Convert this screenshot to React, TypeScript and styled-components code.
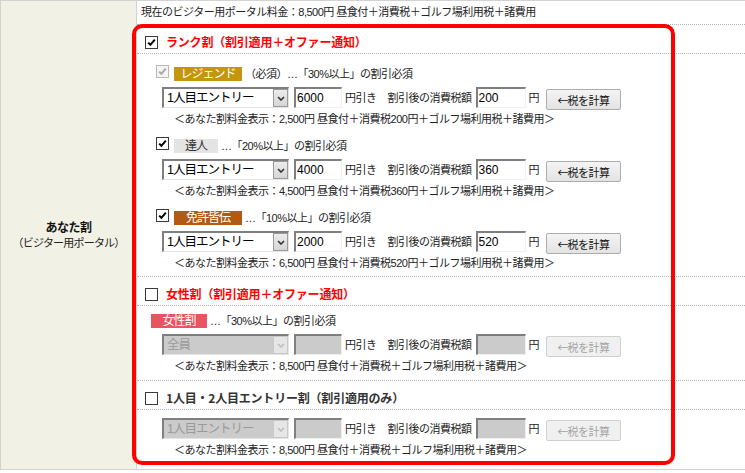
import React from 'react';
import styled, { createGlobalStyle } from 'styled-components';

const FONT = `"Liberation Sans", "Noto Sans CJK JP", sans-serif`;

const GlobalStyle = createGlobalStyle`
  html, body {
    margin: 0;
    padding: 0;
    background: #fff;
  }
  body {
    font-family: ${FONT};
    color: #222;
  }
`;

const Table = styled.div`
  display: grid;
  grid-template-columns: 136px 1fr;
  width: 745px;
  box-sizing: border-box;
  border-top: 1px solid #d2d2d2;
  border-bottom: 1px solid #d2d2d2;
  border-left: 1px solid #d2d2d2;
`;

const LabelCell = styled.div`
  background: #f2f1e6;
  border-right: 1px solid #d2d2d2;
  display: flex;
  flex-direction: column;
  align-items: center;
  justify-content: center;
  padding-top: 1px;
`;

const LabelMain = styled.div`
  font-size: 12px;
  font-weight: bold;
  line-height: 15px;
  color: #111;
  letter-spacing: -0.5px;
`;

const LabelSub = styled.div`
  font-size: 11px;
  line-height: 15px;
  color: #222;
  letter-spacing: -0.8px;
`;

const ContentCell = styled.div`
  min-width: 0;
`;

const FeeRow = styled.div`
  height: 23px;
  line-height: 23px;
  padding-left: 4px;
  font-size: 11px;
  letter-spacing: -0.5px;
  color: #222;
  border-bottom: 1px dotted #b4b4b4;
`;

const Highlight = styled.div`
  position: relative;

  &::after {
    content: '';
    position: absolute;
    top: -1px;
    left: -5px;
    width: 543px;
    bottom: 4px;
    box-sizing: border-box;
    border: 4px solid #ff0000;
    border-radius: 10px;
    pointer-events: none;
  }
`;

const SectionHead = styled.div`
  height: 22px;
  padding: 6px 0 0 8px;
  display: flex;
  align-items: center;
  gap: 8px;
  border-bottom: 1px dotted #b4b4b4;
`;

const HeadTitle = styled.span<{ $color: string }>`
  font-family: "Noto Sans CJK JP", "Liberation Sans", sans-serif;
  font-size: 12px;
  font-weight: bold;
  letter-spacing: -0.2px;
  color: ${p => p.$color};
  line-height: 16px;
`;

const SectionBody = styled.div<{ $pt: number; $pb: number; $last?: boolean }>`
  padding: ${p => p.$pt}px 0 ${p => p.$pb}px;
  border-bottom: ${p => (p.$last ? 'none' : '1px dotted #b4b4b4')};
`;

const RankBlock = styled.div`
  & + & {
    margin-top: 11px;
  }
`;

const LabelRow = styled.div<{ $indent: number }>`
  display: flex;
  align-items: flex-start;
  height: 16px;
  padding-left: ${p => p.$indent}px;
`;

const Badge = styled.span<{ $bg: string; $fg: string; $w: number }>`
  display: inline-block;
  width: ${p => p.$w}px;
  height: 14px;
  margin-top: 2px;
  line-height: 14px;
  text-align: center;
  font-size: 12px;
  letter-spacing: -1px;
  background: ${p => p.$bg};
  color: ${p => p.$fg};
`;

const Note = styled.span`
  margin: 2px 0 0 3px;
  font-size: 11px;
  line-height: 14px;
  letter-spacing: -0.5px;
  color: #222;
`;

const Box = styled.span<{ $disabled?: boolean }>`
  display: inline-flex;
  align-items: center;
  justify-content: center;
  width: 13px;
  height: 13px;
  box-sizing: border-box;
  border: 1px solid ${p => (p.$disabled ? '#b8b8b8' : '#3a3a3a')};
  background: ${p => (p.$disabled ? '#f4f4f4' : '#fff')};
  flex: none;
`;

const RankCheck = styled(Box)`
  margin-right: 5px;
`;

const SelectRow = styled.div`
  display: flex;
  align-items: flex-start;
  height: 23px;
  margin-top: 6px;
  padding-left: 25px;
`;

const SelectBox = styled.div<{ $disabled?: boolean }>`
  display: flex;
  width: 127px;
  height: 21px;
  box-sizing: border-box;
  border-style: solid;
  border-width: 2px 1px 1px 2px;
  border-color: #7f7f7f #e4e4e4 #e4e4e4 #7f7f7f;
  background: ${p => (p.$disabled ? '#cbcbcb' : '#fff')};
`;

const SelectValue = styled.span<{ $disabled?: boolean }>`
  flex: 1;
  padding: 1px 0 0 3px;
  font-size: 12.5px;
  line-height: 17px;
  letter-spacing: -1px;
  color: ${p => (p.$disabled ? '#9a9a9a' : '#000')};
  white-space: nowrap;
  overflow: hidden;
`;

const SelectArrow = styled.span<{ $disabled?: boolean }>`
  display: flex;
  align-items: center;
  justify-content: center;
  width: 15px;
  height: 18px;
  box-sizing: border-box;
  border: 1px solid ${p => (p.$disabled ? '#c8c8c8' : '#9a9a9a')};
  background: ${p => (p.$disabled ? '#e6e6e6' : 'linear-gradient(#ececec, #d6d6d6)')};
  color: ${p => (p.$disabled ? '#bdbdbd' : '#333')};
`;

const NumInput = styled.input<{ $w: number; $ml: number }>`
  width: ${p => p.$w}px;
  height: 21px;
  margin: 0 0 0 ${p => p.$ml}px;
  box-sizing: border-box;
  padding: 0 0 0 1px;
  border-style: solid;
  border-width: 2px 1px 1px 2px;
  border-color: #7f7f7f #f0f0f0 #f0f0f0 #7f7f7f;
  background: #fff;
  font-family: "Liberation Sans", sans-serif;
  font-size: 12px;
  color: #000;
  outline: none;

  &:disabled {
    background: #cbcbcb;
  }
`;

const RowText = styled.span<{ $ml: number }>`
  margin-left: ${p => p.$ml}px;
  font-size: 11px;
  line-height: 23px;
  letter-spacing: -0.5px;
  color: #222;
  white-space: nowrap;
`;

const CalcButton = styled.button`
  width: 75px;
  height: 21px;
  margin: 2px 0 0 7px;
  padding: 0;
  box-sizing: border-box;
  border: 1px solid #acacac;
  border-radius: 2px;
  background: linear-gradient(#f4f4f4, #e3e3e3);
  font-family: ${FONT};
  font-size: 11px;
  letter-spacing: -0.5px;
  color: #111;

  &:disabled {
    border-color: #d0d0d0;
    background: #f0f0f0;
    color: #a4a4a4;
  }
`;

const Arrow = styled.span`
  font-family: "Noto Sans CJK JP", sans-serif;
  letter-spacing: -1px;
`;

const Summary = styled.div`
  margin-top: 2px;
  padding-left: 37px;
  font-size: 11px;
  line-height: 14px;
  letter-spacing: -0.5px;
  color: #222;
  white-space: nowrap;
`;

const CheckBox: React.FC<{ checked?: boolean; disabled?: boolean; as?: typeof Box }> = ({
  checked,
  disabled,
  as: Comp = Box
}) => (
  <Comp $disabled={disabled}>
    {checked && (
      <svg width="9" height="9" viewBox="0 0 9 9">
        <path
          d="M1.2 4.6 L3.4 6.8 L7.8 1.6"
          fill="none"
          stroke={disabled ? '#a8a8a8' : '#000'}
          strokeWidth="2"
        />
      </svg>
    )}
  </Comp>
);

const Chevron = () => (
  <svg width="8" height="5" viewBox="0 0 8 5">
    <polyline points="1,1 4,4 7,1" fill="none" stroke="currentColor" strokeWidth="1.6" />
  </svg>
);

interface RowProps {
  option: string;
  discount?: string;
  tax?: string;
  disabled?: boolean;
  summary: string;
}

const PriceRow: React.FC<RowProps> = ({ option, discount = '', tax = '', disabled, summary }) => (
  <>
    <SelectRow>
      <SelectBox $disabled={disabled}>
        <SelectValue $disabled={disabled}>{option}</SelectValue>
        <SelectArrow $disabled={disabled}>
          <Chevron />
        </SelectArrow>
      </SelectBox>
      <NumInput $w={48} $ml={5} value={discount} disabled={disabled} readOnly />
      <RowText $ml={3}>円引き</RowText>
      <RowText $ml={11}>割引後の消費税額</RowText>
      <NumInput $w={50} $ml={4} value={tax} disabled={disabled} readOnly />
      <RowText $ml={3}>円</RowText>
      <CalcButton disabled={disabled}>
        <Arrow>←</Arrow>税を計算
      </CalcButton>
    </SelectRow>
    <Summary>{summary}</Summary>
  </>
);

const ranks = [
  {
    name: 'レジェンド',
    bg: '#c4960c',
    fg: '#fff',
    w: 68,
    note: '（必須）…「30%以上」の割引必須',
    fixed: true,
    discount: '6000',
    tax: '200',
    summary: '＜あなた割料金表示：2,500円 昼食付＋消費税200円＋ゴルフ場利用税＋諸費用＞'
  },
  {
    name: '達人',
    bg: '#e4e4e4',
    fg: '#333',
    w: 44,
    note: '…「20%以上」の割引必須',
    fixed: false,
    discount: '4000',
    tax: '360',
    summary: '＜あなた割料金表示：4,500円 昼食付＋消費税360円＋ゴルフ場利用税＋諸費用＞'
  },
  {
    name: '免許皆伝',
    bg: '#b25a12',
    fg: '#fff',
    w: 68,
    note: '…「10%以上」の割引必須',
    fixed: false,
    discount: '2000',
    tax: '520',
    summary: '＜あなた割料金表示：6,500円 昼食付＋消費税520円＋ゴルフ場利用税＋諸費用＞'
  }
];

const baseSummary = '＜あなた割料金表示：8,500円 昼食付＋消費税＋ゴルフ場利用税＋諸費用＞';

export default function App() {
  return (
    <>
      <GlobalStyle />
      <Table>
        <LabelCell>
          <LabelMain>あなた割</LabelMain>
          <LabelSub>（ビジター用ポータル）</LabelSub>
        </LabelCell>
        <ContentCell>
          <FeeRow>現在のビジター用ポータル料金：8,500円 昼食付＋消費税＋ゴルフ場利用税＋諸費用</FeeRow>
          <Highlight>
            <SectionHead>
              <CheckBox checked />
              <HeadTitle $color="#ff0000">ランク割（割引適用＋オファー通知）</HeadTitle>
            </SectionHead>
            <SectionBody $pt={11} $pb={6}>
              {ranks.map(r => (
                <RankBlock key={r.name}>
                  <LabelRow $indent={19}>
                    <CheckBox checked disabled={r.fixed} as={RankCheck} />
                    <Badge $bg={r.bg} $fg={r.fg} $w={r.w}>
                      {r.name}
                    </Badge>
                    <Note>{r.note}</Note>
                  </LabelRow>
                  <PriceRow
                    option="1人目エントリー"
                    discount={r.discount}
                    tax={r.tax}
                    summary={r.summary}
                  />
                </RankBlock>
              ))}
            </SectionBody>

            <SectionHead>
              <CheckBox />
              <HeadTitle $color="#ff0000">女性割（割引適用＋オファー通知）</HeadTitle>
            </SectionHead>
            <SectionBody $pt={6} $pb={7}>
              <LabelRow $indent={14}>
                <Badge $bg="#e85460" $fg="#fff" $w={56}>
                  女性割
                </Badge>
                <Note>…「30%以上」の割引必須</Note>
              </LabelRow>
              <PriceRow option="全員" disabled summary={baseSummary} />
            </SectionBody>

            <SectionHead>
              <CheckBox />
              <HeadTitle $color="#333">1人目・2人目エントリー割（割引適用のみ）</HeadTitle>
            </SectionHead>
            <SectionBody $pt={2} $pb={12} $last>
              <PriceRow option="1人目エントリー" disabled summary={baseSummary} />
            </SectionBody>
          </Highlight>
        </ContentCell>
      </Table>
    </>
  );
}
